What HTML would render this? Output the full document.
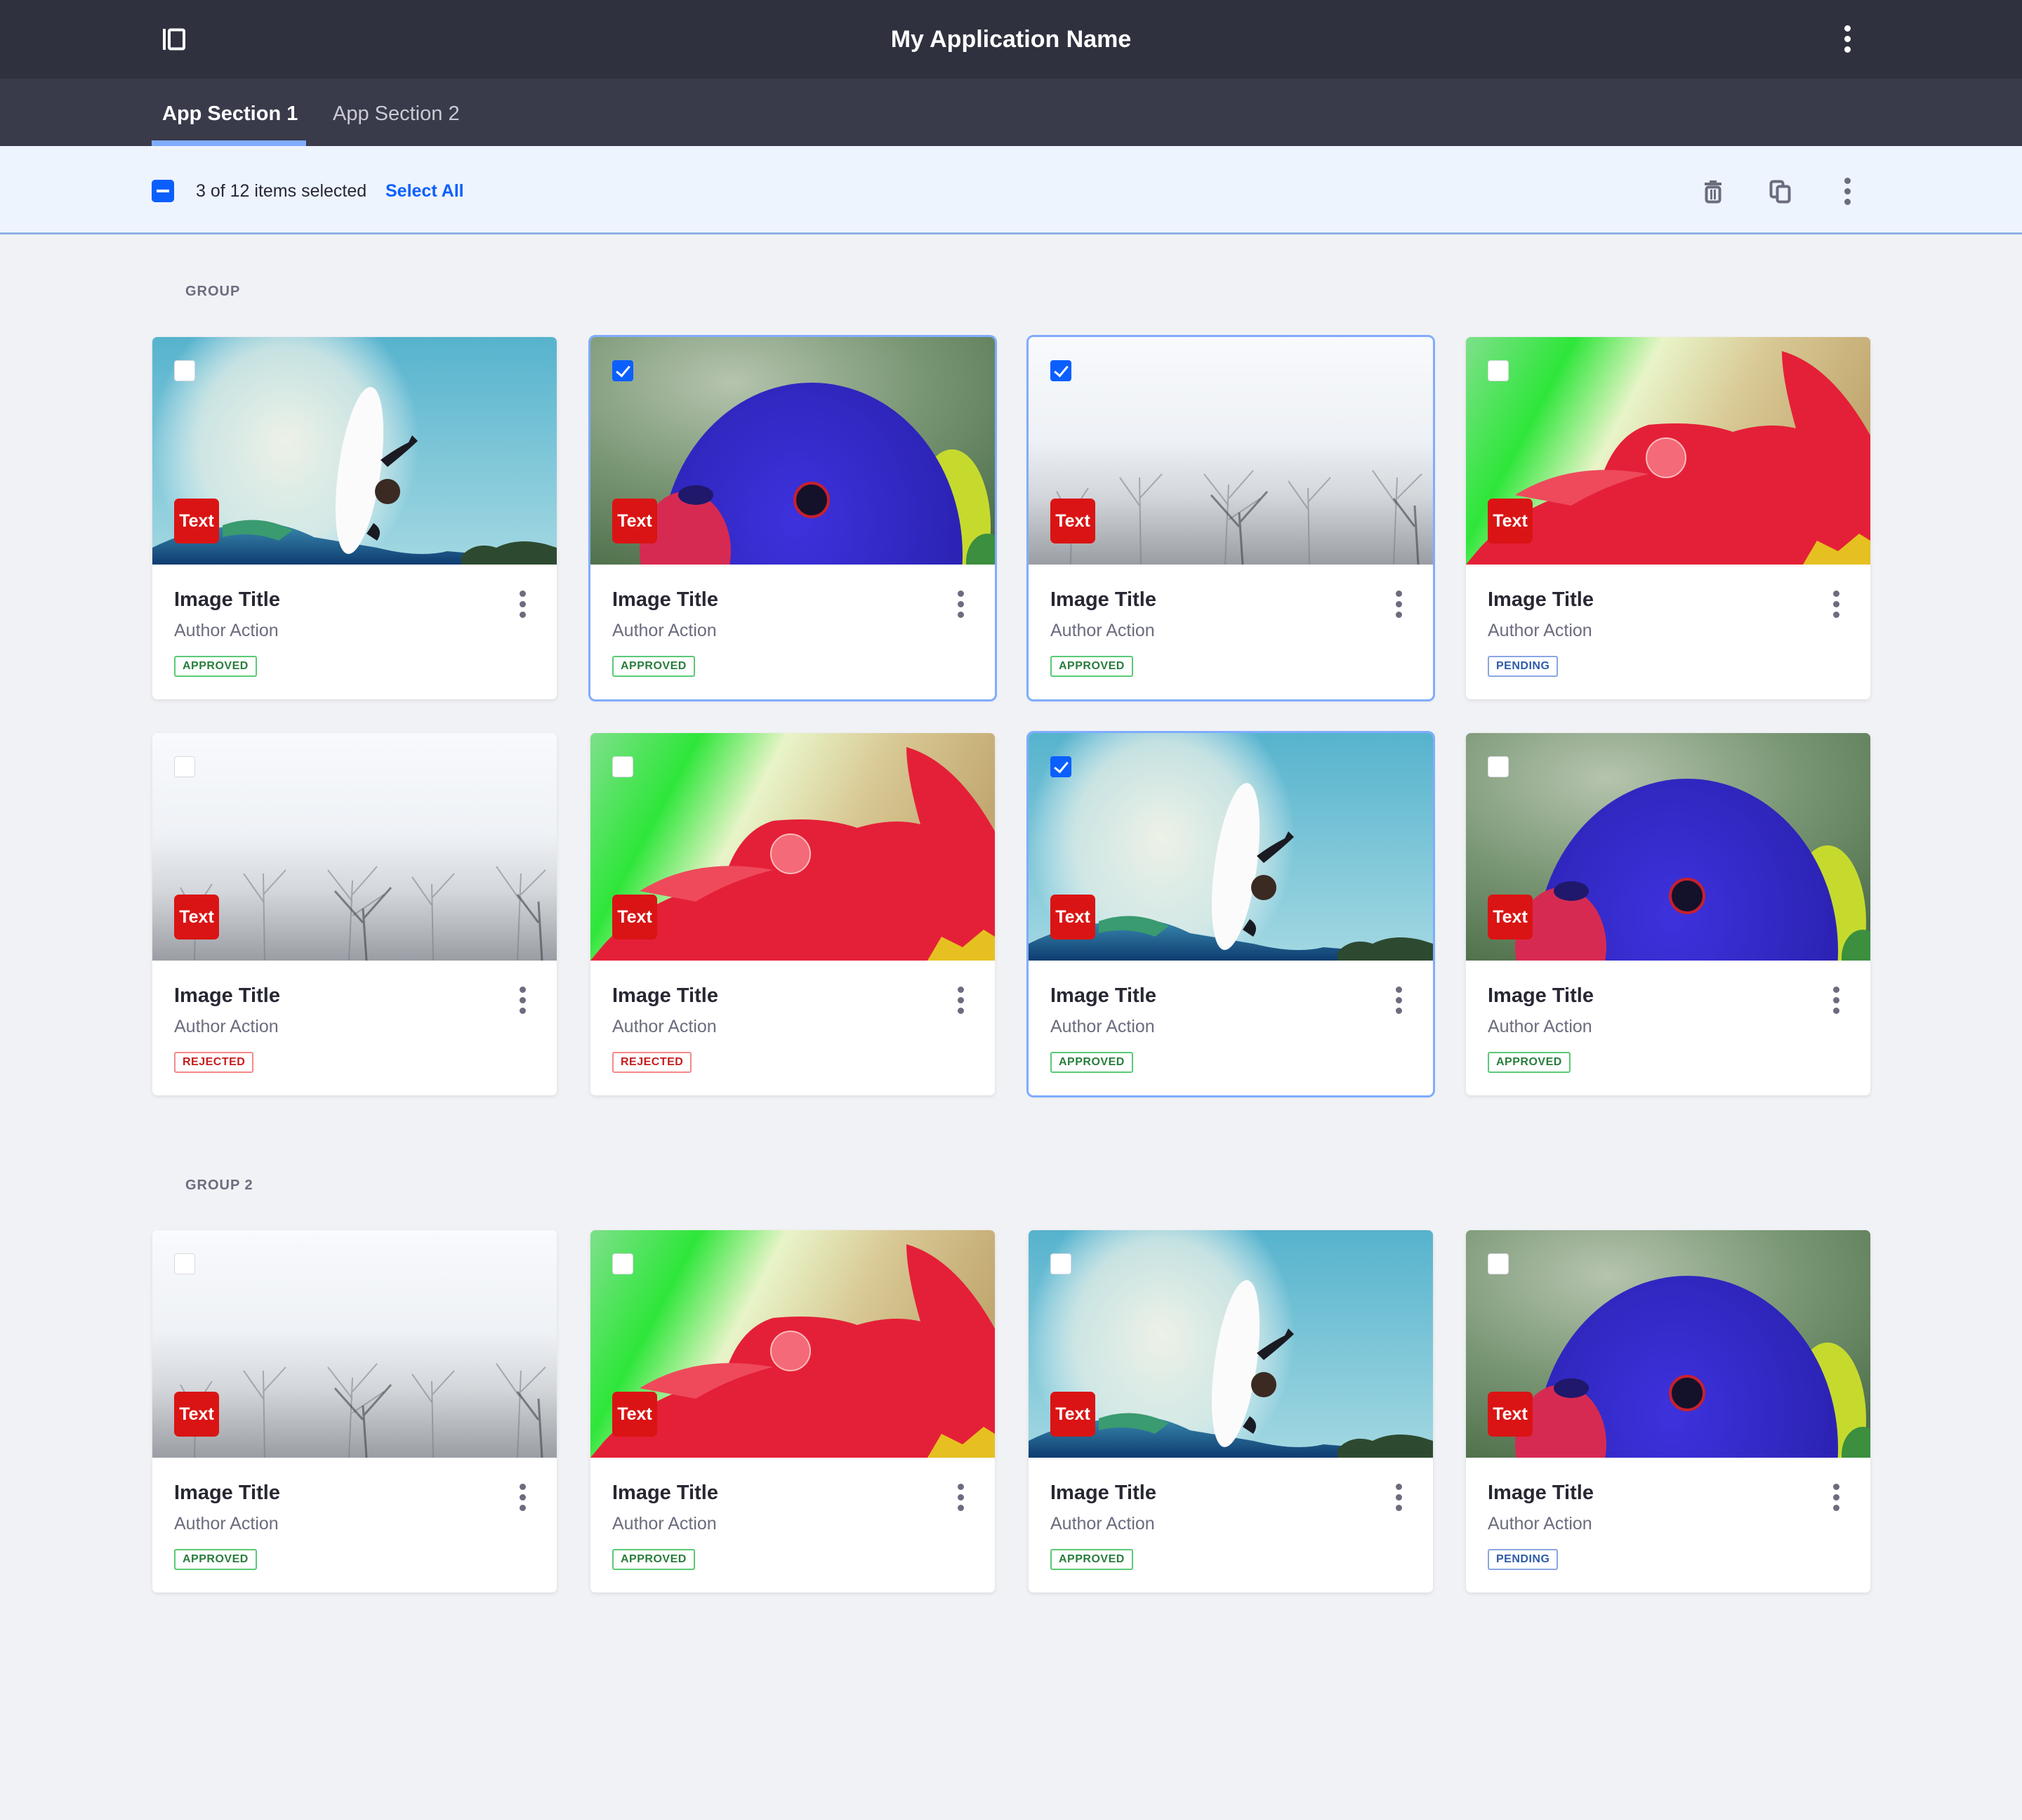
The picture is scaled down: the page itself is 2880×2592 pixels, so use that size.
<!DOCTYPE html>
<html><head><meta charset="utf-8">
<style>
*{box-sizing:border-box;margin:0;padding:0}
body{width:2880px;height:2592px;background:#f1f2f5;font-family:"Liberation Sans",sans-serif;position:relative;overflow:hidden}
.hdr{position:absolute;left:0;top:0;width:2880px;height:112px;background:#2f313e}
.title{position:absolute;left:0;width:2880px;top:34px;text-align:center;color:#fff;font-size:34px;font-weight:bold;line-height:44px}
.tabs{position:absolute;left:0;top:112px;width:2880px;height:96px;background:#393b4b}
.tab{position:absolute;top:30px;font-size:29px;line-height:40px;color:#c9cad3}
.tab.act{color:#fff;font-weight:bold}
.uline{position:absolute;left:216px;top:200px;width:220px;height:8px;background:#80acff}
.sel{position:absolute;left:0;top:208px;width:2880px;height:126px;background:#eef4fe;border-bottom:3px solid #8fb0e6}
.sel .cb{position:absolute;left:216px;top:48px;width:32px;height:32px;background:#0b5fff;border-radius:5px}
.sel .cb:after{content:"";position:absolute;left:7px;top:14px;width:18px;height:4px;background:#fff}
.seltxt{position:absolute;left:279px;top:47px;font-size:25px;line-height:34px;color:#272833}
.selall{position:absolute;left:549px;top:47px;font-size:25px;line-height:34px;color:#0b5fff;font-weight:bold}
.grp{position:absolute;left:264px;font-size:20px;color:#6b6c7e;font-weight:bold;letter-spacing:1px}
.card{position:absolute;width:576px;height:516px;background:#fff;border-radius:7px;box-shadow:0 2px 6px rgba(0,0,0,.09);overflow:hidden}
.card.on{box-shadow:0 0 0 3px #80acff,0 2px 6px rgba(0,0,0,.09)}
.img{position:absolute;left:0;top:0;width:576px;height:324px}
.img svg{display:block}
.ck{position:absolute;left:31px;top:33px;width:30px;height:30px;background:#fff;border-radius:4px;border:1px solid #d8d9e0}
.ck.on{background:#0b5fff;border-color:#0b5fff}
.ck.on:after{content:"";position:absolute;left:9px;top:3px;width:8px;height:16px;border:solid #fff;border-width:0 3px 3px 0;transform:rotate(40deg)}
.badge{position:absolute;left:31px;top:230px;width:64px;height:64px;background:#da1414;border-radius:7px;color:#fff;font-size:25px;font-weight:bold;line-height:64px;text-align:center}
.t{position:absolute;left:31px;top:354px;font-size:29px;line-height:40px;color:#272833;font-weight:bold}
.a{position:absolute;left:31px;top:401px;font-size:25px;line-height:34px;color:#6b6c7e}
.lb{position:absolute;left:31px;top:454px;height:30px;padding:0 10px;border:2px solid;border-radius:3px;font-size:16px;line-height:26px;font-weight:bold;letter-spacing:.5px}
.ap{color:#287d3c;border-color:#5aca75}
.pe{color:#2e5aac;border-color:#89a7e0}
.re{color:#c71c1c;border-color:#f48989}
.kb{position:absolute;left:523px;top:361px;width:10px;height:40px}
.kb i,.hk i{display:block;width:9px;height:9px;border-radius:50%;background:#6b6c7e;margin-bottom:6px}
.hk{position:absolute}
</style></head><body>
<div class="hdr">
 <svg style="position:absolute;left:231px;top:39px" width="34" height="34" viewBox="0 0 34 34"><rect x="1" y="2" width="4" height="30" fill="#fff"/><rect x="10" y="3.5" width="21" height="27" rx="2" fill="none" stroke="#fff" stroke-width="4"/></svg>
 <div class="title">My Application Name</div>
 <div class="hk" style="left:2627px;top:36px"><i style="background:#fff"></i><i style="background:#fff"></i><i style="background:#fff"></i></div>
</div>
<div class="tabs">
 <div class="tab act" style="left:231px">App Section 1</div>
 <div class="tab" style="left:474px">App Section 2</div>
</div>
<div class="uline"></div>
<div class="sel">
 <div class="cb"></div>
 <div class="seltxt">3 of 12 items selected</div>
 <div class="selall">Select All</div>
 <svg style="position:absolute;left:2425px;top:48px" width="30" height="34" viewBox="0 0 30 34"><rect x="3" y="4" width="24" height="4" fill="#6b6c7e"/><rect x="10" y="1" width="10" height="4" fill="#6b6c7e"/><rect x="5.5" y="10.5" width="19" height="21" rx="3" fill="none" stroke="#6b6c7e" stroke-width="4"/><rect x="11" y="14" width="3" height="14" fill="#6b6c7e"/><rect x="16" y="14" width="3" height="14" fill="#6b6c7e"/></svg>
 <svg style="position:absolute;left:2520px;top:48px" width="32" height="34" viewBox="0 0 32 34"><rect x="2.5" y="2.5" width="17" height="22" rx="3" fill="none" stroke="#6b6c7e" stroke-width="4"/><rect x="11.5" y="9.5" width="17" height="22" rx="3" fill="#eef4fe" stroke="#6b6c7e" stroke-width="4"/></svg>
 <div class="hk" style="left:2627px;top:45px"><i></i><i></i><i></i></div>
</div>
<div class="grp" style="top:404px">GROUP</div>
<div class="grp" style="top:1677px">GROUP 2</div>

<svg width="0" height="0" style="position:absolute">
<defs>
<linearGradient id="gs" x1="0" y1="0" x2="0" y2="1"><stop offset="0" stop-color="#56b3cd"/><stop offset="1" stop-color="#a3d8e2"/></linearGradient>
<radialGradient id="gsp" cx=".5" cy=".5" r=".5"><stop offset="0" stop-color="#f4f4e8" stop-opacity=".95"/><stop offset=".65" stop-color="#e8f0e8" stop-opacity=".75"/><stop offset="1" stop-color="#fff" stop-opacity="0"/></radialGradient>
<linearGradient id="gw" x1="0" y1="0" x2="0" y2="1"><stop offset="0" stop-color="#3a8ab0"/><stop offset="1" stop-color="#0e3c70"/></linearGradient>
<radialGradient id="gp" cx=".35" cy=".2" r=".9"><stop offset="0" stop-color="#b6c4ae"/><stop offset=".5" stop-color="#7b9876"/><stop offset="1" stop-color="#4e6f4a"/></radialGradient>
<radialGradient id="gb" cx=".45" cy=".4" r=".6"><stop offset="0" stop-color="#3d32dd"/><stop offset="1" stop-color="#2a21b0"/></radialGradient>
<linearGradient id="gf" x1="0" y1="0" x2="1" y2=".3"><stop offset="0" stop-color="#7ee08a"/><stop offset=".25" stop-color="#2ee63a"/><stop offset=".45" stop-color="#e8f4c8"/><stop offset=".7" stop-color="#d8c894"/><stop offset="1" stop-color="#c2a870"/></linearGradient>
<linearGradient id="gfo" x1="0" y1="0" x2="0" y2="1"><stop offset="0" stop-color="#f8fafd"/><stop offset=".45" stop-color="#eef1f5"/><stop offset=".7" stop-color="#d3d6da"/><stop offset="1" stop-color="#9a9ea4"/></linearGradient>
<symbol id="surf" viewBox="0 0 576 324">
 <rect width="576" height="324" fill="url(#gs)"/>
 <ellipse cx="190" cy="150" rx="190" ry="210" fill="url(#gsp)"/>
 <path d="M0,300 Q60,270 120,270 Q170,255 230,285 L320,300 Q380,315 420,305 L576,318 L576,324 L0,324Z" fill="url(#gw)"/>
 <path d="M100,268 Q150,250 200,275 L180,290 Q140,275 100,285Z" fill="#3a9a70"/>
 <path d="M440,312 Q460,290 490,300 Q520,285 560,295 L576,300 L576,324 L440,324Z" fill="#2d4a30"/>
 <g transform="rotate(8 295 190)"><ellipse cx="295" cy="190" rx="30" ry="120" fill="#fbfbfb"/></g>
 <path d="M325,175 Q345,160 365,150 L370,140 L378,148 Q360,165 335,185Z" fill="#1a1a22"/>
 <circle cx="335" cy="220" r="18" fill="#3a2a22"/>
 <path d="M315,265 Q330,275 320,290 L305,280Z" fill="#1a1a22"/>
</symbol>
<symbol id="parrot" viewBox="0 0 576 324">
 <rect width="576" height="324" fill="url(#gp)"/>
 <ellipse cx="515" cy="270" rx="55" ry="110" fill="#c6da2e"/>
 <ellipse cx="565" cy="320" rx="30" ry="40" fill="#3b8f3e"/>
 <ellipse cx="315" cy="310" rx="215" ry="245" fill="url(#gb)"/>
 <ellipse cx="135" cy="305" rx="65" ry="85" fill="#d72a52"/>
 <ellipse cx="150" cy="225" rx="25" ry="14" fill="#20186a"/>
 <circle cx="315" cy="232" r="24" fill="#14122a" stroke="#c8202e" stroke-width="4"/>
</symbol>
<symbol id="flower" viewBox="0 0 576 324">
 <rect width="576" height="324" fill="url(#gf)"/>
 <path d="M0,324 L20,300 Q80,235 190,210 Q210,140 260,125 Q330,118 380,135 Q430,120 470,130 Q450,60 450,20 Q520,40 576,140 L576,324Z" fill="#e42038"/>
 <path d="M70,225 Q150,175 260,195 Q200,210 150,240Z" fill="#ee4a5c"/>
 <circle cx="285" cy="172" r="28" fill="#f46a78" stroke="#fbb" stroke-width="2"/>
 <path d="M480,324 L500,290 L530,305 L560,280 L576,290 L576,324Z" fill="#e6c020"/>
</symbol>
<symbol id="fog" viewBox="0 0 576 324">
 <rect width="576" height="324" fill="url(#gfo)"/>
 <g stroke="#7a7e84" stroke-width="2" fill="none" opacity=".55">
  <path d="M60,324 L62,230 M62,260 L40,220 M62,250 L85,215"/>
  <path d="M160,324 L158,200 M158,240 L130,200 M158,230 L190,195"/>
  <path d="M280,324 L285,210 M285,240 L250,195 M285,230 L320,190 M285,260 L330,230"/>
  <path d="M400,324 L398,215 M398,245 L370,205 M398,235 L430,200"/>
  <path d="M520,324 L525,200 M525,240 L490,190 M525,230 L560,195"/>
 </g>
 <g stroke="#404448" stroke-width="3" fill="none" opacity=".6">
  <path d="M305,324 L300,250 M300,270 L260,225 M300,265 L340,220"/>
  <path d="M555,324 L550,240 M550,270 L520,230"/>
 </g>
</symbol>
</defs>
</svg>

<!-- Row 1 -->
<div class="card" style="left:217px;top:480px"><div class="img"><svg width="576" height="324"><use href="#surf"/></svg></div><div class="ck"></div><div class="badge">Text</div><div class="t">Image Title</div><div class="a">Author Action</div><div class="lb ap">APPROVED</div><div class="kb"><i></i><i></i><i></i></div></div>
<div class="card on" style="left:841px;top:480px"><div class="img"><svg width="576" height="324"><use href="#parrot"/></svg></div><div class="ck on"></div><div class="badge">Text</div><div class="t">Image Title</div><div class="a">Author Action</div><div class="lb ap">APPROVED</div><div class="kb"><i></i><i></i><i></i></div></div>
<div class="card on" style="left:1465px;top:480px"><div class="img"><svg width="576" height="324"><use href="#fog"/></svg></div><div class="ck on"></div><div class="badge">Text</div><div class="t">Image Title</div><div class="a">Author Action</div><div class="lb ap">APPROVED</div><div class="kb"><i></i><i></i><i></i></div></div>
<div class="card" style="left:2088px;top:480px"><div class="img"><svg width="576" height="324"><use href="#flower"/></svg></div><div class="ck"></div><div class="badge">Text</div><div class="t">Image Title</div><div class="a">Author Action</div><div class="lb pe">PENDING</div><div class="kb"><i></i><i></i><i></i></div></div>
<!-- Row 2 -->
<div class="card" style="left:217px;top:1044px"><div class="img"><svg width="576" height="324"><use href="#fog"/></svg></div><div class="ck"></div><div class="badge">Text</div><div class="t">Image Title</div><div class="a">Author Action</div><div class="lb re">REJECTED</div><div class="kb"><i></i><i></i><i></i></div></div>
<div class="card" style="left:841px;top:1044px"><div class="img"><svg width="576" height="324"><use href="#flower"/></svg></div><div class="ck"></div><div class="badge">Text</div><div class="t">Image Title</div><div class="a">Author Action</div><div class="lb re">REJECTED</div><div class="kb"><i></i><i></i><i></i></div></div>
<div class="card on" style="left:1465px;top:1044px"><div class="img"><svg width="576" height="324"><use href="#surf"/></svg></div><div class="ck on"></div><div class="badge">Text</div><div class="t">Image Title</div><div class="a">Author Action</div><div class="lb ap">APPROVED</div><div class="kb"><i></i><i></i><i></i></div></div>
<div class="card" style="left:2088px;top:1044px"><div class="img"><svg width="576" height="324"><use href="#parrot"/></svg></div><div class="ck"></div><div class="badge">Text</div><div class="t">Image Title</div><div class="a">Author Action</div><div class="lb ap">APPROVED</div><div class="kb"><i></i><i></i><i></i></div></div>
<!-- Row 3 -->
<div class="card" style="left:217px;top:1752px"><div class="img"><svg width="576" height="324"><use href="#fog"/></svg></div><div class="ck"></div><div class="badge">Text</div><div class="t">Image Title</div><div class="a">Author Action</div><div class="lb ap">APPROVED</div><div class="kb"><i></i><i></i><i></i></div></div>
<div class="card" style="left:841px;top:1752px"><div class="img"><svg width="576" height="324"><use href="#flower"/></svg></div><div class="ck"></div><div class="badge">Text</div><div class="t">Image Title</div><div class="a">Author Action</div><div class="lb ap">APPROVED</div><div class="kb"><i></i><i></i><i></i></div></div>
<div class="card" style="left:1465px;top:1752px"><div class="img"><svg width="576" height="324"><use href="#surf"/></svg></div><div class="ck"></div><div class="badge">Text</div><div class="t">Image Title</div><div class="a">Author Action</div><div class="lb ap">APPROVED</div><div class="kb"><i></i><i></i><i></i></div></div>
<div class="card" style="left:2088px;top:1752px"><div class="img"><svg width="576" height="324"><use href="#parrot"/></svg></div><div class="ck"></div><div class="badge">Text</div><div class="t">Image Title</div><div class="a">Author Action</div><div class="lb pe">PENDING</div><div class="kb"><i></i><i></i><i></i></div></div>
</body></html>
